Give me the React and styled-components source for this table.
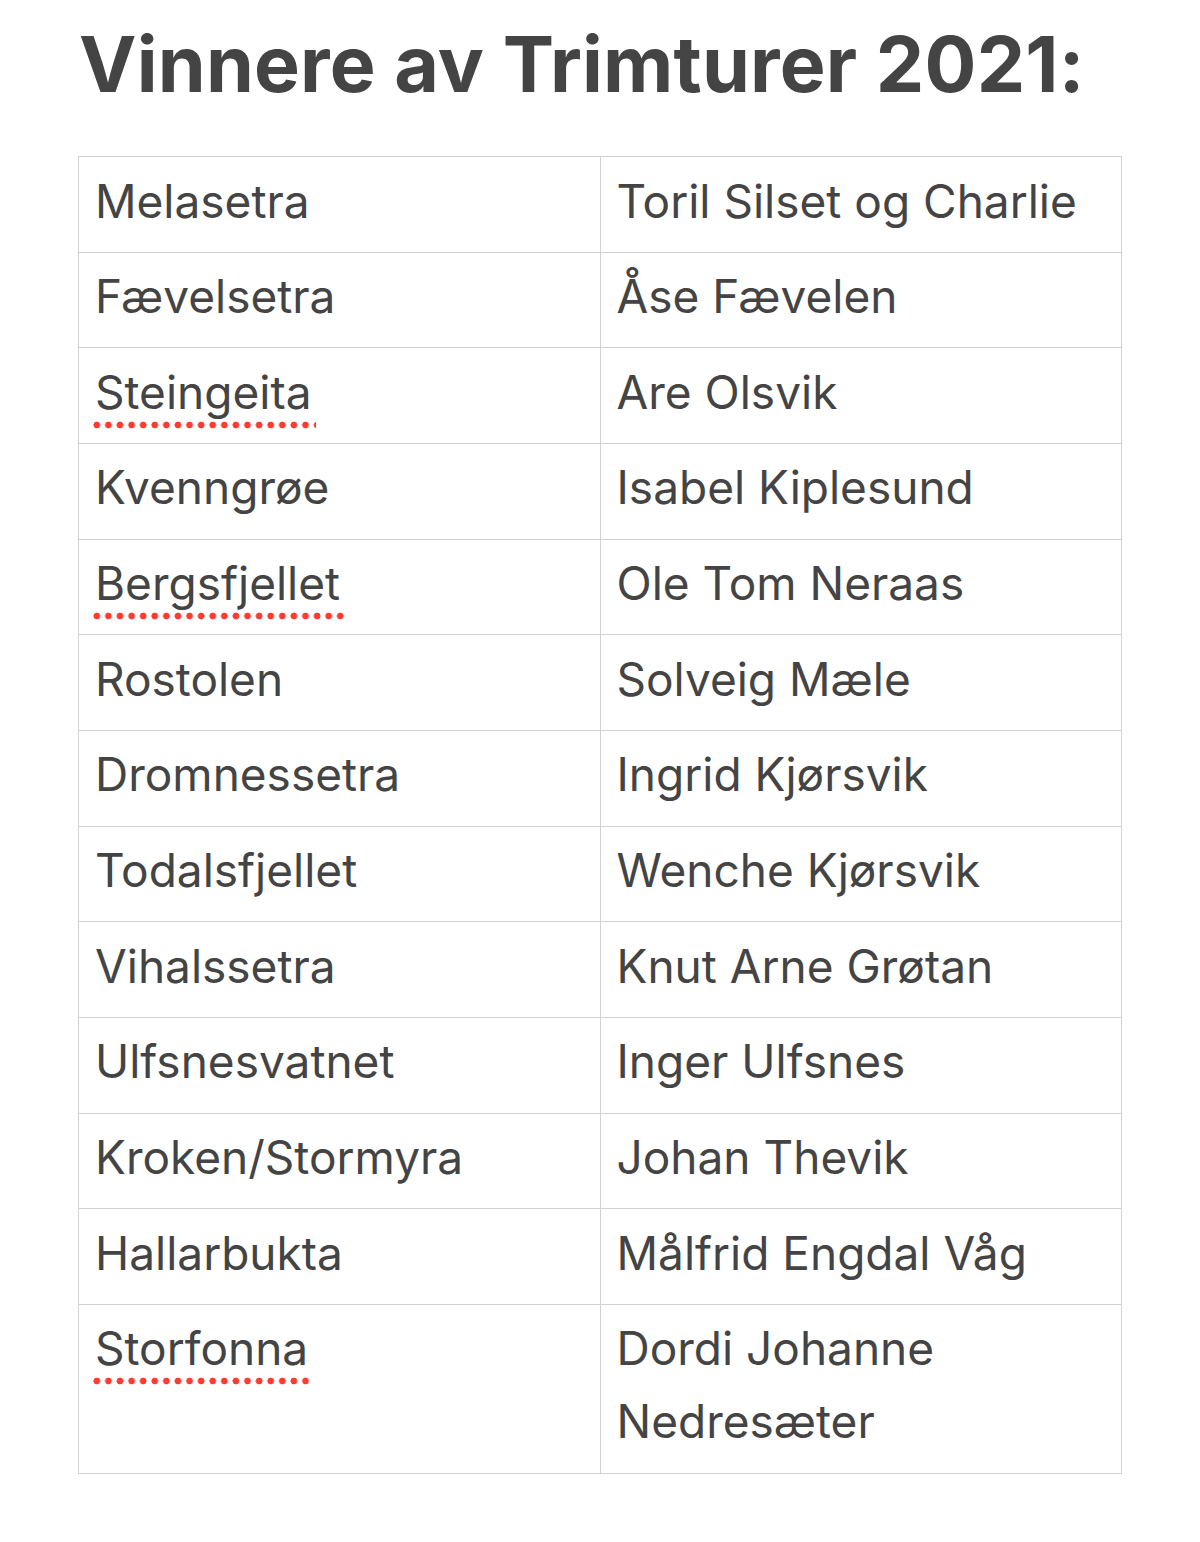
import React from 'react'
import styled, { createGlobalStyle } from 'styled-components'

const GlobalStyle = createGlobalStyle`
  body {
    margin: 0;
    background: #fff;
    font-family: Inter, "Noto Sans", sans-serif;
    color: #444;
  }
`

const rows = [
  ['Melasetra', 'Toril Silset og Charlie'],
  ['Fævelsetra', 'Åse Fævelen'],
  ['Steingeita', 'Are Olsvik', true],
  ['Kvenngrøe', 'Isabel Kiplesund'],
  ['Bergsfjellet', 'Ole Tom Neraas', true],
  ['Rostolen', 'Solveig Mæle'],
  ['Dromnessetra', 'Ingrid Kjørsvik'],
  ['Todalsfjellet', 'Wenche Kjørsvik'],
  ['Vihalssetra', 'Knut Arne Grøtan'],
  ['Ulfsnesvatnet', 'Inger Ulfsnes'],
  ['Kroken/Stormyra', 'Johan Thevik'],
  ['Hallarbukta', 'Målfrid Engdal Våg'],
  ['Storfonna', 'Dordi Johanne Nedresæter', true],
]

const Page = styled.main`
  padding: 18px 78px 60px 78px;
  width: 1044px;
`

const Title = styled.h1`
  margin: 0 0 46px 1px;
  font-size: 77px;
  line-height: 92px;
  font-weight: 700;
  letter-spacing: 0.2px;
  color: #444;
`

const Table = styled.table`
  width: 1044px;
  border-collapse: collapse;
  table-layout: fixed;
  border: 1px solid #cfcfcf;
`

const Cell = styled.td`
  width: 50%;
  border: 1px solid #d2d2d2;
  padding: 7.5px 16px 14.17px 16px;
  font-size: 46px;
  line-height: 73px;
  vertical-align: top;
  color: #444;
`

// red dotted spell-check underline
const Misspelled = styled.span`
  margin: 0 -4px;
  padding: 0 4px 9px 4px;
  background-image: radial-gradient(circle, #ff3b30 3.1px, transparent 3.7px);
  background-repeat: repeat-x;
  background-position: 0 bottom;
  background-size: 11.6px 8px;
`

export default function App() {
  return (
    <>
      <GlobalStyle />
      <Page>
        <Title>Vinnere av Trimturer 2021:</Title>
        <Table>
          <tbody>
            {rows.map(([place, name, flagged]) => (
              <tr key={place}>
                <Cell>{flagged ? <Misspelled>{place}</Misspelled> : place}</Cell>
                <Cell>{name}</Cell>
              </tr>
            ))}
          </tbody>
        </Table>
      </Page>
    </>
  )
}
